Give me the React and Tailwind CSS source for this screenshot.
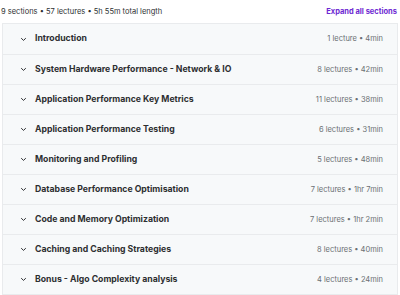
import React from "react";

const sections = [
  ["Introduction", "1 lecture • 4min"],
  ["System Hardware Performance - Network & IO", "8 lectures • 42min"],
  ["Application Performance Key Metrics", "11 lectures • 38min"],
  ["Application Performance Testing", "6 lectures • 31min"],
  ["Monitoring and Profiling", "5 lectures • 48min"],
  ["Database Performance Optimisation", "7 lectures • 1hr 7min"],
  ["Code and Memory Optimization", "7 lectures • 1hr 2min"],
  ["Caching and Caching Strategies", "8 lectures • 40min"],
  ["Bonus - Algo Complexity analysis", "4 lectures • 24min"],
];

function Chevron() {
  return (
    <svg width="7" height="5" viewBox="0 0 7 5" className="shrink-0">
      <path d="M1.2 1.2 L3.5 3.4 L5.8 1.2" fill="none" stroke="#2d2f31" strokeWidth="1" />
    </svg>
  );
}

export default function App() {
  return (
    <div className="w-[400px] h-[295px] bg-white overflow-hidden font-['Inter',sans-serif]">
      <div className="flex items-center justify-between h-[23px] pl-[1px] pr-[3px]">
        <span className="text-[7.5px] text-[#2d2f31]">9 sections • 57 lectures • 5h 55m total length</span>
        <span className="text-[7.5px] font-bold text-[#6d28d2]">Expand all sections</span>
      </div>
      <div className="mx-[2px] border border-[#e9ebed] bg-[#f7f9fa]">
        {sections.map(([t, m], i) => (
          <div
            key={i}
            className={`flex items-center h-[30px] pl-[17px] pr-[14px] ${i > 0 ? "border-t border-[#e9ebed]" : ""}`}
          >
            <Chevron />
            <span className="ml-[8px] text-[8.7px] font-bold text-[#2d2f31]">{t}</span>
            <span className="ml-auto text-[7.5px] text-[#6a6f73]">{m}</span>
          </div>
        ))}
      </div>
    </div>
  );
}
